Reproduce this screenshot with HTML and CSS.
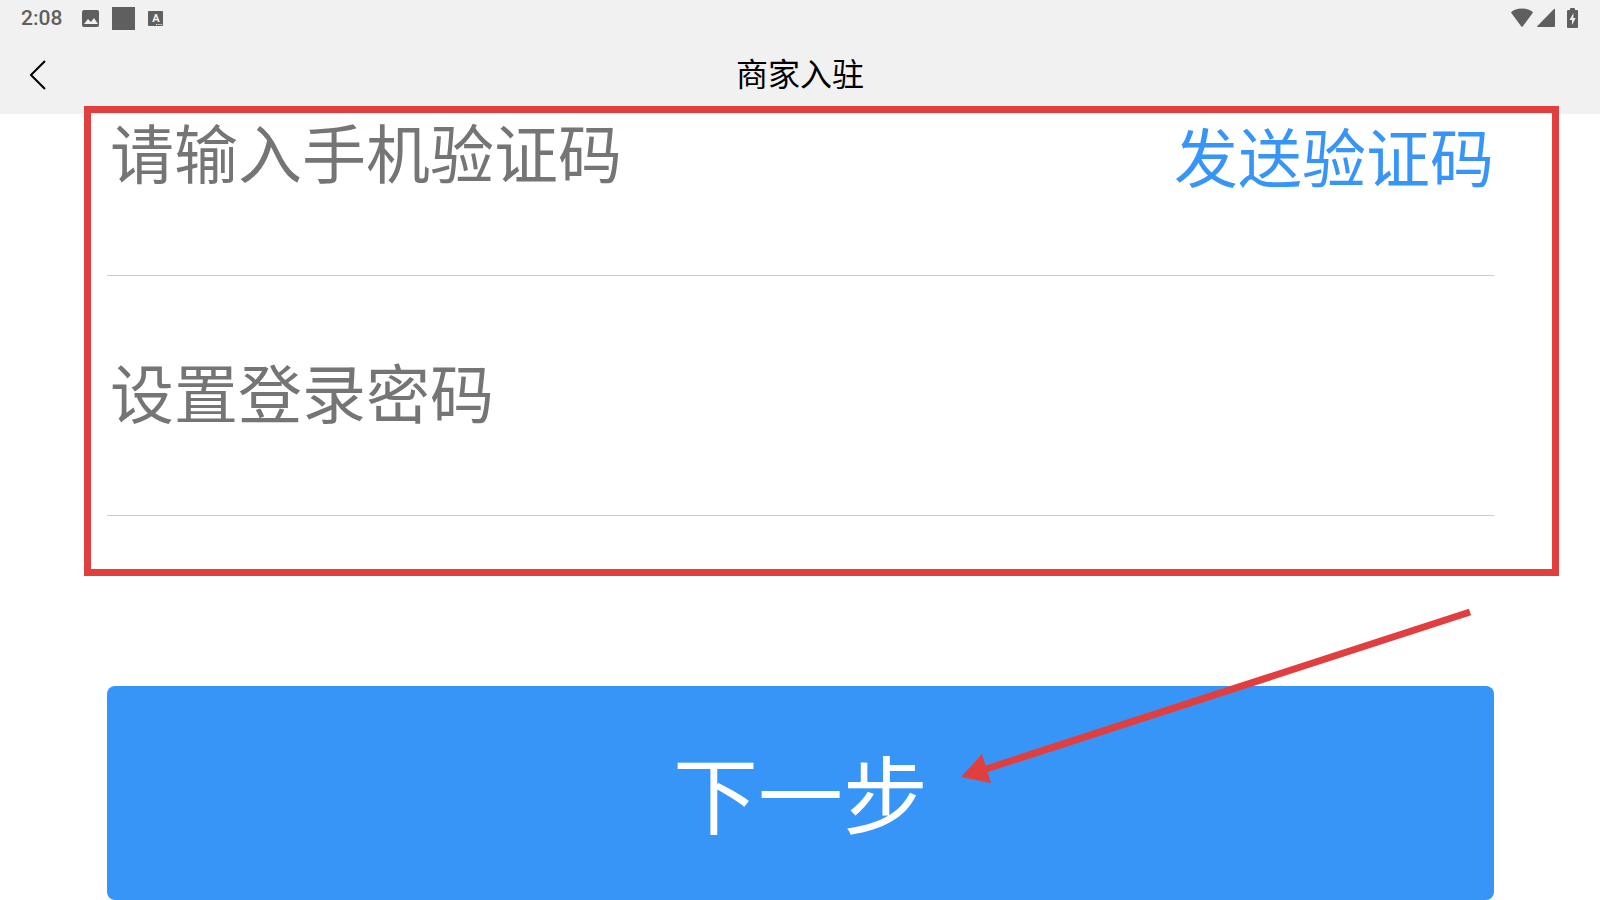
FILE: index.html
```html
<!DOCTYPE html>
<html lang="zh-CN">
<head>
  <meta charset="UTF-8">
  <meta name="viewport" content="width=device-width, initial-scale=1">
  <title>商家入驻</title>
  <link rel="stylesheet" href="styles.css">
</head>
<body>
  <header class="top">
    <div class="status">
      <div class="status-left">
        <span class="time">2:08</span>
        <svg width="17" height="17" viewBox="0 0 17 17">
          <rect width="17" height="17" rx="2" fill="#5f5f5f"/>
          <path d="M2 14l4-5 3 3 3-4 4 6z" fill="#f1f1f1"/>
        </svg>
        <span class="block"></span>
        <svg width="15" height="15" viewBox="0 0 15 15">
          <rect width="15" height="15" rx="1" fill="#5f5f5f"/>
          <text class="letter" x="8" y="11" text-anchor="middle">A</text>
          <path d="M8 13h1.300v1H8zM10.300 13h1.300v1h-1.300zM12.500 13h1.300v1h-1.300z" fill="#f1f1f1"/>
        </svg>
      </div>
      <div class="status-right">
        <svg width="22" height="20" viewBox="0 0 22 20">
          <path d="M0 4.500Q1 3 4 1.800Q11-1 18 1.800Q21 3 22 4.500L11.700 18.500Q11 19.200 10.300 18.500z" fill="#5f5f5f"/>
        </svg>
        <svg width="18" height="20" viewBox="0 0 18 20">
          <path d="M17 1q1-.8 1 .4V18q0 1-1 1H1q-1.500 0-.6-1z" fill="#5f5f5f"/>
        </svg>
        <svg width="11" height="20" viewBox="0 0 11 20">
          <path d="M3 2V1q0-1 1-1h3q1 0 1 1v1h2q1 0 1 1v16q0 1-1 1H1q-1 0-1-1V3q0-1 1-1z" fill="#5f5f5f"/>
          <path d="M6.500 5L2.500 12H5v5l3.700-7H6.300z" fill="#f1f1f1"/>
        </svg>
      </div>
    </div>
    <div class="navbar">
      <button class="back" type="button" aria-label="返回">
        <svg width="16" height="30" viewBox="0 0 16 30">
          <path d="M15 1L1 15l14 14" fill="none" stroke="#000" stroke-width="2"/>
        </svg>
      </button>
      <h1>商家入驻</h1>
    </div>
  </header>

  <form class="form">
    <div class="fields">
      <div class="row">
        <input type="text" id="code" aria-label="手机验证码" placeholder="请输入手机验证码">
        <button class="send" type="button">发送验证码</button>
      </div>
      <div class="row">
        <input type="password" id="password" aria-label="登录密码" placeholder="设置登录密码">
      </div>
      <div class="frame"></div>
    </div>
    <div class="action">
      <button class="next" type="submit">下一步</button>
      <svg class="arrow" width="512" height="180" viewBox="0 0 512 180">
        <path d="M509 6L22 164" stroke="#e13e40" stroke-width="7"/>
        <path d="M0 171L21 148l9 29z" fill="#e13e40"/>
      </svg>
    </div>
  </form>
</body>
</html>
```

FILE: styles.css
```css
* {
  box-sizing: border-box;
}
body {
  margin: 0;
  background: #fff;
  font-family: "Noto Sans CJK SC", sans-serif;
}
button, input {
  font-family: inherit;
  border: none;
  background: none;
  padding: 0;
}
button {
  cursor: pointer;
}
svg {
  display: block;
}

/* status bar + title */
.top {
  background: #f1f1f1;
}
.status {
  display: flex;
  justify-content: space-between;
  height: 36px;
  padding: 0 22px 0 21px;
}
.status-left, .status-right {
  display: flex;
  align-items: center;
}
.status-left {
  gap: 13px;
}
.status-right {
  gap: 4px;
}
.status-right svg:last-child {
  margin-left: 8px;
}
.time {
  margin-right: 7px;
  font: 500 21px/36px Roboto, sans-serif;
  color: #5f5f5f;
}
.block {
  width: 23px;
  height: 23px;
  background: #5f5f5f;
}
.letter {
  font: 700 11px Roboto, sans-serif;
  fill: #f1f1f1;
}
.navbar {
  display: grid;
  grid-template-columns: 80px 1fr 80px;
  align-items: center;
  height: 78px;
}
.back {
  padding-left: 30px;
}
h1 {
  margin: 0;
  padding-bottom: 6px;
  font-size: 32px;
  font-weight: 400;
  line-height: 48px;
  text-align: center;
}

/* form */
.form {
  padding: 0 106px 0 107px;
}
.fields {
  position: relative;
}
.row {
  display: flex;
  align-items: flex-start;
  padding: 78px 0 89px;
  border-bottom: 1px solid #ccc;
}
.row:first-child {
  padding-top: 0;
}
.row input {
  flex: 1;
  min-width: 0;
  height: 72px;
  padding: 0 3px;
  font-size: 64px;
  outline: none;
}
.row input::placeholder {
  color: #757575;
}
.send {
  height: 80px;
  margin-bottom: -8px;
  font-size: 64px;
  line-height: 80px;
  color: #3895f8;
}
.frame {
  position: absolute;
  top: -8px;
  right: -65px;
  bottom: -60px;
  left: -23px;
  border: 7px solid #e13e40;
  pointer-events: none;
}
.action {
  position: relative;
  padding-top: 170px;
}
.next {
  display: block;
  width: 100%;
  height: 214px;
  padding-bottom: 6px;
  border-radius: 8px;
  background: #3895f8;
  color: #fff;
  font-size: 85px;
}
.arrow {
  position: absolute;
  top: 90px;
  right: 21px;
  pointer-events: none;
}
```
